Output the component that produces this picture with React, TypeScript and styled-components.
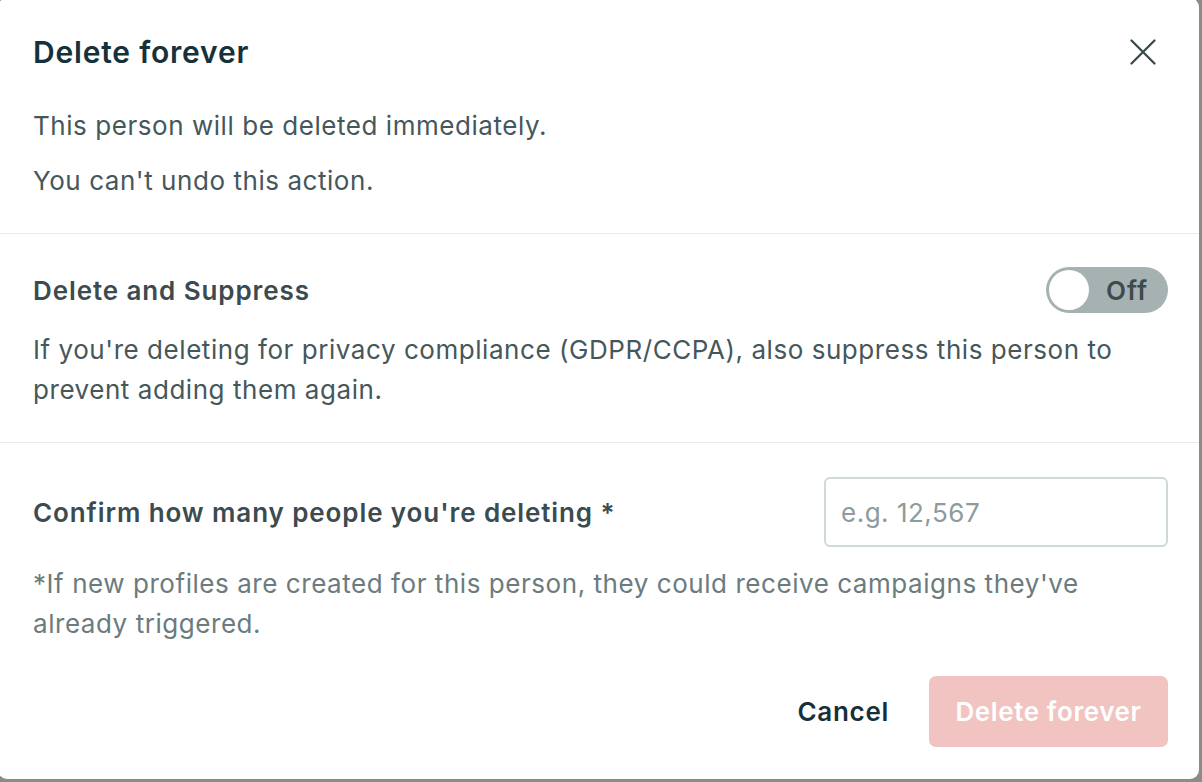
import React from "react";
import styled, { createGlobalStyle } from "styled-components";

const Global = createGlobalStyle`
  html, body { margin: 0; padding: 0; }
  body {
    background: #8a8c8c;
    font-family: Inter, "Noto Sans", "Liberation Sans", sans-serif;
    overflow: hidden;
  }
  * { box-sizing: border-box; }
`;

const Backdrop = styled.div`
  width: 1202px;
  height: 782px;
  overflow: hidden;
`;

const Modal = styled.div`
  width: 1201px;
  height: 781px;
  margin: -2px 0 0 -2px;
  background: #ffffff;
  border-radius: 9px;
  display: flex;
  flex-direction: column;
`;

const Section = styled.section<{ $top: number; $bottom: number }>`
  padding: ${(p) => p.$top}px 31px ${(p) => p.$bottom}px 35px;
  border-bottom: ${(p) => (p.$bottom > 0 ? "1px solid #e7ebeb" : "none")};
  display: flex;
  flex-direction: column;
`;

const HeaderRow = styled.div`
  display: flex;
  align-items: center;
  justify-content: space-between;
  height: 36px;
`;

const Title = styled.h2`
  margin: 0;
  font-size: 30px;
  line-height: 36px;
  font-weight: 600;
  color: #17313a;
  letter-spacing: 0.8px;
`;

const CloseButton = styled.button`
  border: none;
  background: none;
  padding: 0;
  width: 28px;
  height: 28px;
  margin-right: 11px;
  display: flex;
  align-items: center;
  justify-content: center;
  cursor: pointer;
`;

const Para = styled.p<{ $mt: number; $muted?: boolean }>`
  margin: ${(p) => p.$mt}px 0 0 0;
  font-size: 26px;
  line-height: 40px;
  letter-spacing: 0.55px;
  color: ${(p) => (p.$muted ? "#6b7b7e" : "#46575b")};
  font-weight: 400;
`;

const Row = styled.div<{ $h: number }>`
  display: flex;
  align-items: center;
  justify-content: space-between;
  height: ${(p) => p.$h}px;
`;

const Label = styled.span`
  font-size: 26px;
  font-weight: 600;
  letter-spacing: 0.9px;
  color: #3c4b4f;
`;

const Toggle = styled.button`
  width: 122px;
  height: 46px;
  border-radius: 23px;
  border: none;
  background: #a6b2b2;
  padding: 0 3px;
  display: flex;
  align-items: center;
  cursor: pointer;
`;

const Knob = styled.span`
  width: 40px;
  height: 40px;
  border-radius: 50%;
  background: #ffffff;
  flex: none;
`;

const ToggleText = styled.span`
  flex: 1;
  text-align: center;
  font-family: Inter, sans-serif;
  font-size: 26px;
  font-weight: 600;
  letter-spacing: 1px;
  color: #3e4b4e;
`;

const Input = styled.input`
  width: 344px;
  height: 70px;
  border: 2px solid #cfd9d9;
  border-radius: 6px;
  padding: 0 15px;
  font-family: Inter, sans-serif;
  font-size: 26px;
  letter-spacing: 0.5px;
  color: #2c3b3e;
  outline: none;
  &::placeholder { color: #8d9b9d; }
`;

const Footer = styled.div`
  margin-top: 32px;
  display: flex;
  justify-content: flex-end;
  align-items: center;
  gap: 40px;
`;

const TextButton = styled.button`
  border: none;
  background: none;
  padding: 0;
  font-family: Inter, sans-serif;
  font-size: 26px;
  font-weight: 600;
  letter-spacing: 0.7px;
  color: #16303a;
  cursor: pointer;
`;

const DangerButton = styled.button`
  width: 239px;
  height: 71px;
  border: none;
  border-radius: 7px;
  background: #f2c4c1;
  color: #ffffff;
  font-family: Inter, sans-serif;
  font-size: 26px;
  font-weight: 600;
  letter-spacing: 0.6px;
  cursor: not-allowed;
`;

export default function App() {
  return (
    <>
      <Global />
      <Backdrop>
        <Modal>
          <Section $top={36} $bottom={32}>
            <HeaderRow>
              <Title>Delete forever</Title>
              <CloseButton aria-label="Close">
                <svg width="26" height="26" viewBox="0 0 26 26">
                  <path d="M1.5 1.5 L24.5 24.5 M24.5 1.5 L1.5 24.5" stroke="#3b4a4d" strokeWidth="2.3" strokeLinecap="round" />
                </svg>
              </CloseButton>
            </HeaderRow>
            <Para $mt={36}>This person will be deleted immediately.</Para>
            <Para $mt={15}>You can't undo this action.</Para>
          </Section>
          <Section $top={33} $bottom={32}>
            <Row $h={46}>
              <Label>Delete and Suppress</Label>
              <Toggle aria-label="Delete and Suppress">
                <Knob />
                <ToggleText>Off</ToggleText>
              </Toggle>
            </Row>
            <Para $mt={17}>
              If you're deleting for privacy compliance (GDPR/CCPA), also suppress this person to prevent adding them again.
            </Para>
          </Section>
          <Section $top={34} $bottom={0}>
            <Row $h={70}>
              <Label>Confirm how many people you're deleting *</Label>
              <Input placeholder="e.g. 12,567" />
            </Row>
            <Para $mt={17} $muted>
              *If new profiles are created for this person, they could receive campaigns they've already triggered.
            </Para>
            <Footer>
              <TextButton>Cancel</TextButton>
              <DangerButton>Delete forever</DangerButton>
            </Footer>
          </Section>
        </Modal>
      </Backdrop>
    </>
  );
}
